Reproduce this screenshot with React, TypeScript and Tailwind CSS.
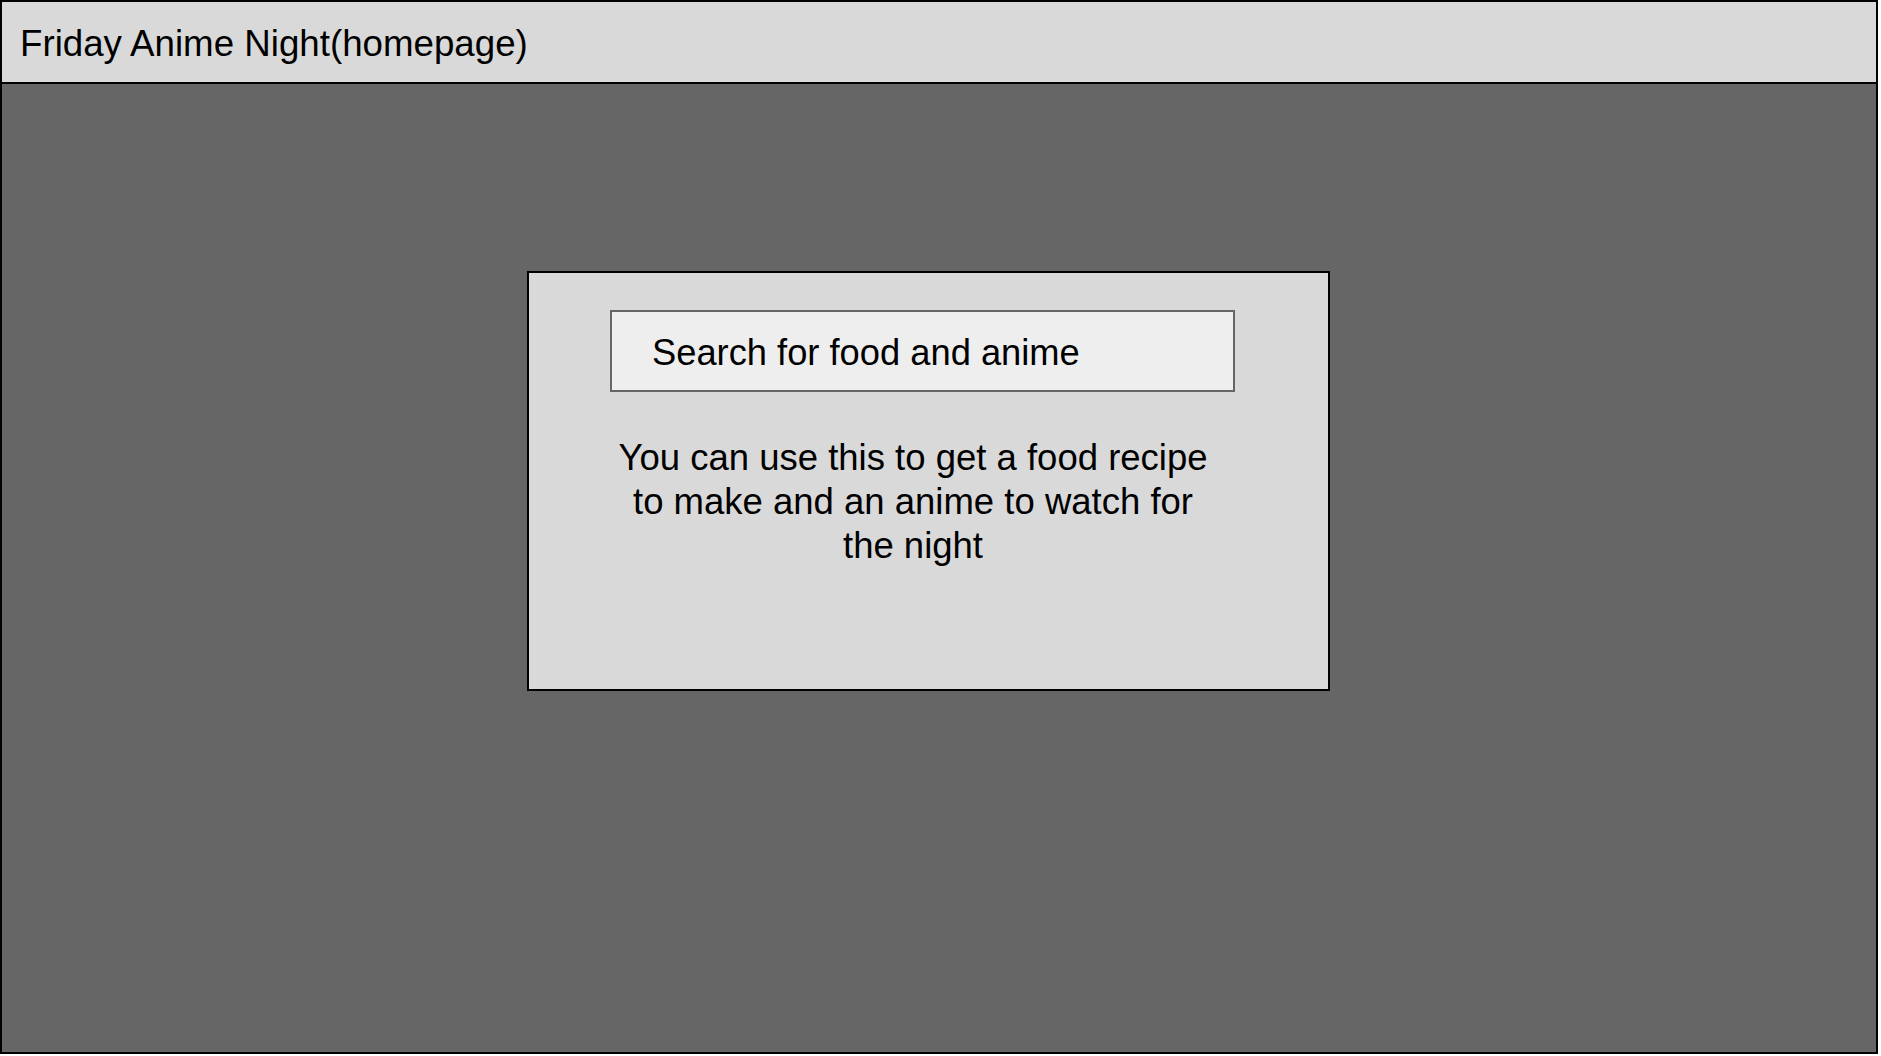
export default function App() {
  return (
    <div
      className="h-[1054px] w-[1878px] flex flex-col border-2 border-black bg-[#666666]"
      style={{ fontFamily: '"Liberation Sans", Arial, sans-serif' }}
    >
      {/* Header */}
      <header className="h-[82px] shrink-0 flex items-center border-b-2 border-black bg-[#d9d9d9] pl-[18px] pt-[4px]">
        <h1 className="text-[36.7px] leading-none text-black">Friday Anime Night(homepage)</h1>
      </header>

      {/* Main */}
      <main className="flex-1 pl-[525px] pt-[187px]">
        <div className="w-[803px] h-[420px] border-2 border-black bg-[#d9d9d9] pl-[81px] pt-[37px]">
          <div className="w-[625px] h-[82px] flex items-center border-2 border-[#666666] bg-[#eeeeee] pl-[40px] pt-[4px]">
            <span className="text-[36.3px] leading-none text-black">Search for food and anime</span>
          </div>
          <p className="mt-[44px] ml-[3px] w-[600px] text-center text-[36.5px] leading-[44px] text-black">
            You can use this to get a food recipe to make and an anime to watch for the night
          </p>
        </div>
      </main>
    </div>
  );
}
